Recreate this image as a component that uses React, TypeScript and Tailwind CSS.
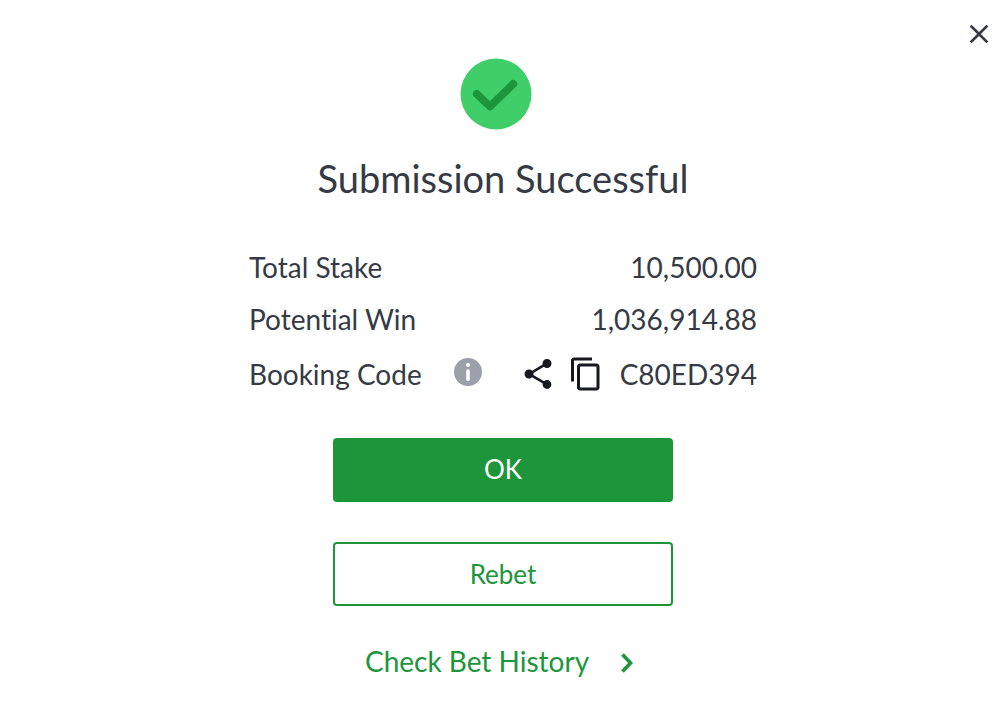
import React from 'react'
import { MdClose, MdContentCopy, MdShare } from 'react-icons/md'

const SuccessIcon = () => (
    <svg viewBox="0 0 72 72" className="w-[72px] h-[72px] mr-3.5" aria-hidden="true">
        <circle cx="36" cy="36" r="35.5" fill="#3fce67" />
        <path d="M16.8 36 L30 48.5 L53.2 26" fill="none" stroke="#1d963b" strokeWidth="7.8" strokeLinecap="round" strokeLinejoin="round" />
    </svg>
)

const InfoIcon = () => (
    <svg viewBox="0 0 28 28" className="w-7 h-7" aria-hidden="true">
        <circle cx="14" cy="14" r="14" fill="#9ca0ab" />
        <circle cx="14" cy="7" r="2" fill="#fff" />
        <path d="M14 13 V21.5" fill="none" stroke="#fff" strokeWidth="3.6" strokeLinecap="round" />
    </svg>
)

const ChevronIcon = () => (
    <svg viewBox="0 0 12 20" className="w-3 h-5 mt-1" aria-hidden="true">
        <path d="M1.5 1.4 L9.6 10 L1.5 18.6" fill="none" stroke="currentColor" strokeWidth="3.6" />
    </svg>
)

interface StakeRowProps {
    label: string
    value: string
}

const StakeRow = ({ label, value }: StakeRowProps) => {
    return (
        <div className="flex items-center justify-between h-[52px]">
            <dt>{label}</dt>
            <dd>{value}</dd>
        </div>
    )
}

const App = () => {
    return (
        <main className="min-h-screen bg-white text-[#353a45] font-['Lato',sans-serif] [font-variant-ligatures:none]">
            <header className="flex justify-end pt-[18px] pr-[9px]">
                <button type="button" aria-label="Close">
                    <MdClose className="w-8 h-8" />
                </button>
            </header>

            <section className="flex flex-col items-center pt-2 pb-8 pl-0.5">
                <SuccessIcon />
                <h1 className="mt-6 text-[38px] leading-[48px]">Submission Successful</h1>

                <dl className="w-full max-w-[508px] mt-[39px] text-[28px] leading-9">
                    <StakeRow label="Total Stake" value="10,500.00" />
                    <StakeRow label="Potential Win" value="1,036,914.88" />
                    <div className="flex items-center justify-between h-[57px]">
                        <dt className="flex items-center gap-8">
                            Booking Code
                            <button type="button" aria-label="About the booking code" className="mb-1">
                                <InfoIcon />
                            </button>
                        </dt>
                        <dd className="flex items-center gap-4">
                            <span className="flex gap-3 text-[#16191f]">
                                <button type="button" aria-label="Share">
                                    <MdShare className="w-9 h-9" />
                                </button>
                                <button type="button" aria-label="Copy">
                                    <MdContentCopy className="w-9 h-9" />
                                </button>
                            </span>
                            C80ED394
                        </dd>
                    </div>
                </dl>

                <div className="flex flex-col gap-10 w-full max-w-[340px] mt-9 text-[26px] leading-8">
                    <button type="button" className="h-16 pb-0.5 rounded bg-[#1d963b] text-white">
                        OK
                    </button>
                    <button type="button" className="h-16 rounded border-2 border-[#1d963b] text-[#1d963b]">
                        Rebet
                    </button>
                </div>

                <a href="#history" className="flex items-center gap-8 mt-[37px] mr-2 text-[28px] leading-9 text-[#1d963b]">
                    Check Bet History
                    <ChevronIcon />
                </a>
            </section>
        </main>
    )
}

export default App
